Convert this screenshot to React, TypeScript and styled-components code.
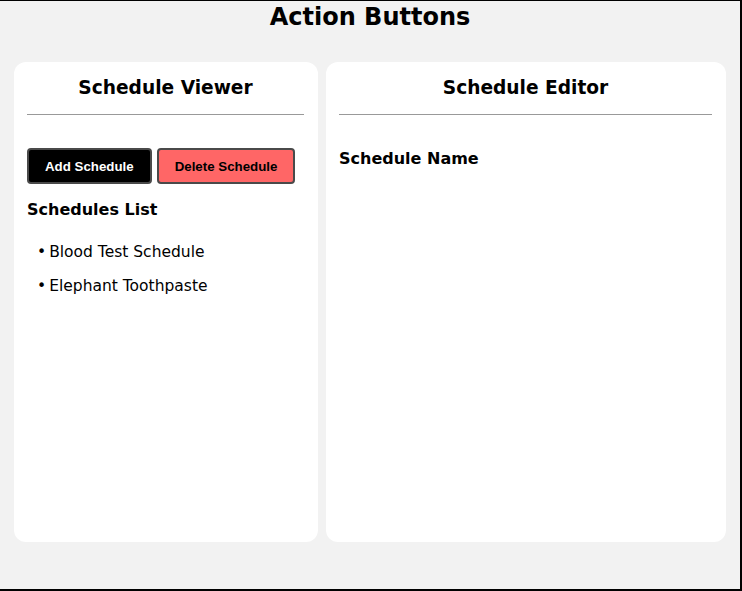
import React from 'react';
import styled, { createGlobalStyle } from 'styled-components';

const GlobalStyle = createGlobalStyle`
    html, body {
        margin: 0;
        padding: 0;
    }
    body {
        font-family: "DejaVu Sans", Verdana, sans-serif;
        color: #000;
    }
`

const Frame = styled.div`
    box-sizing: border-box;
    width: 742px;
    height: 591px;
    background: #f2f2f2;
    border-top: 1px solid #000;
    border-right: 2px solid #000;
    border-bottom: 2px solid #000;
    padding: 0 14px;
`

const PageTitle = styled.h1`
    margin: 0;
    height: 61px;
    padding-top: 2px;
    box-sizing: border-box;
    text-align: center;
    font-size: 24px;
    font-weight: 700;
    line-height: 28px;
`

const Panels = styled.div`
    display: flex;
    gap: 8px;
    height: 480px;
`

const Card = styled.section<{ $width: number }>`
    box-sizing: border-box;
    width: ${({ $width }) => $width}px;
    background: #fff;
    border-radius: 12px;
    padding: 14px 14px 14px 13px;
    display: flex;
    flex-direction: column;
`

const CardTitle = styled.h2`
    margin: 0;
    text-align: center;
    font-size: 18.6px;
    font-weight: 700;
    line-height: 24px;
`

const Divider = styled.hr`
    margin: 14px 0 0;
    border: none;
    border-top: 1px solid #999;
    height: 0;
`

const Actions = styled.div`
    display: flex;
    gap: 5px;
    margin-top: 33px;
`

const ActionButton = styled.button<{ $danger?: boolean }>`
    box-sizing: border-box;
    height: 36px;
    padding: 0 16px;
    border: 2px solid #4a4a4a;
    border-radius: 4px;
    background: ${({ $danger }) => ($danger ? '#ff6666' : '#000')};
    color: ${({ $danger }) => ($danger ? '#000' : '#fff')};
    font-family: "Liberation Sans", Arial, sans-serif;
    font-size: 13.3px;
    font-weight: 700;
    cursor: pointer;
`

const SectionLabel = styled.h3<{ $top: number }>`
    margin: ${({ $top }) => $top}px 0 0;
    font-size: 16px;
    font-weight: 700;
    line-height: 20px;
`

const ScheduleList = styled.ul`
    margin: 15px 0 0;
    padding-left: 10px;
    list-style: none;
`

const ScheduleItem = styled.li`
    font-size: 15.5px;
    line-height: 34px;
    &::before {
        content: '•';
        margin-right: 3px;
    }
`

const schedules = ['Blood Test Schedule', 'Elephant Toothpaste']

const App = () => {
    return (
        <>
            <GlobalStyle />
            <Frame>
                <PageTitle>Action Buttons</PageTitle>
                <Panels>
                    <Card $width={304}>
                        <CardTitle>Schedule Viewer</CardTitle>
                        <Divider />
                        <Actions>
                            <ActionButton>Add Schedule</ActionButton>
                            <ActionButton $danger>Delete Schedule</ActionButton>
                        </Actions>
                        <SectionLabel $top={16}>Schedules List</SectionLabel>
                        <ScheduleList>
                            {schedules.map((name) => (
                                <ScheduleItem key={name}>{name}</ScheduleItem>
                            ))}
                        </ScheduleList>
                    </Card>
                    <Card $width={400}>
                        <CardTitle>Schedule Editor</CardTitle>
                        <Divider />
                        <SectionLabel $top={34}>Schedule Name</SectionLabel>
                    </Card>
                </Panels>
            </Frame>
        </>
    );
}

export default App;
